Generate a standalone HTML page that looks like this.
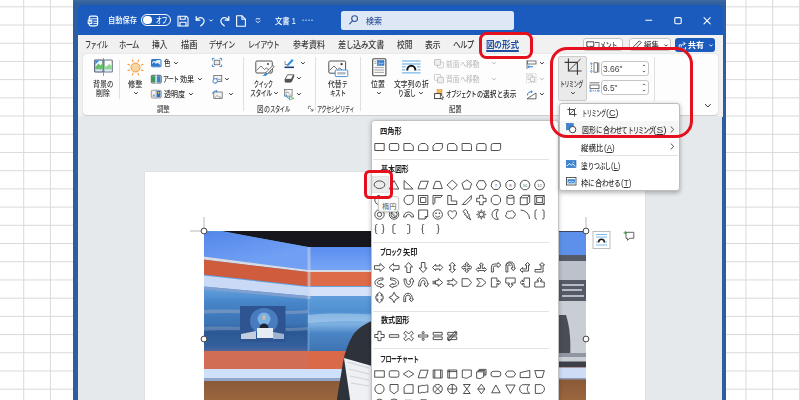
<!DOCTYPE html>
<html lang="ja"><head><meta charset="utf-8"><title>Word - 図の形式 - トリミング</title>
<style>
html,body{margin:0;padding:0;width:800px;height:400px;overflow:hidden;background:#fff}
#root{width:800px;height:400px;overflow:hidden;position:relative;background:#fff;font-family:"Liberation Sans","Noto Sans CJK JP",sans-serif}
.a{position:absolute}
.w{position:absolute;left:0;width:800px;height:0;white-space:pre}
.t{position:absolute;top:0;white-space:pre;transform-origin:0 50%;display:block}
svg{position:absolute;overflow:visible}
u{text-decoration:underline;text-underline-offset:1px;text-decoration-thickness:0.6px}
</style></head><body><div id="root">
<svg width="800" height="400" style="left:0;top:0" stroke="#dadada" stroke-width="1"><line x1="23.70" y1="0" x2="23.70" y2="400"/><line x1="50.45" y1="0" x2="50.45" y2="400"/><line x1="77.20" y1="0" x2="77.20" y2="400"/><line x1="103.95" y1="0" x2="103.95" y2="400"/><line x1="130.70" y1="0" x2="130.70" y2="400"/><line x1="157.45" y1="0" x2="157.45" y2="400"/><line x1="184.20" y1="0" x2="184.20" y2="400"/><line x1="210.95" y1="0" x2="210.95" y2="400"/><line x1="237.70" y1="0" x2="237.70" y2="400"/><line x1="264.45" y1="0" x2="264.45" y2="400"/><line x1="291.20" y1="0" x2="291.20" y2="400"/><line x1="317.95" y1="0" x2="317.95" y2="400"/><line x1="344.70" y1="0" x2="344.70" y2="400"/><line x1="371.45" y1="0" x2="371.45" y2="400"/><line x1="398.20" y1="0" x2="398.20" y2="400"/><line x1="424.95" y1="0" x2="424.95" y2="400"/><line x1="451.70" y1="0" x2="451.70" y2="400"/><line x1="478.45" y1="0" x2="478.45" y2="400"/><line x1="505.20" y1="0" x2="505.20" y2="400"/><line x1="531.95" y1="0" x2="531.95" y2="400"/><line x1="558.70" y1="0" x2="558.70" y2="400"/><line x1="585.45" y1="0" x2="585.45" y2="400"/><line x1="612.20" y1="0" x2="612.20" y2="400"/><line x1="638.95" y1="0" x2="638.95" y2="400"/><line x1="665.70" y1="0" x2="665.70" y2="400"/><line x1="692.45" y1="0" x2="692.45" y2="400"/><line x1="719.20" y1="0" x2="719.20" y2="400"/><line x1="745.95" y1="0" x2="745.95" y2="400"/><line x1="772.70" y1="0" x2="772.70" y2="400"/><line x1="799.45" y1="0" x2="799.45" y2="400"/><line x1="0" y1="6.80" x2="800" y2="6.80"/><line x1="0" y1="25.01" x2="800" y2="25.01"/><line x1="0" y1="43.22" x2="800" y2="43.22"/><line x1="0" y1="61.43" x2="800" y2="61.43"/><line x1="0" y1="79.64" x2="800" y2="79.64"/><line x1="0" y1="97.85" x2="800" y2="97.85"/><line x1="0" y1="116.06" x2="800" y2="116.06"/><line x1="0" y1="134.27" x2="800" y2="134.27"/><line x1="0" y1="152.48" x2="800" y2="152.48"/><line x1="0" y1="170.69" x2="800" y2="170.69"/><line x1="0" y1="188.90" x2="800" y2="188.90"/><line x1="0" y1="207.11" x2="800" y2="207.11"/><line x1="0" y1="225.32" x2="800" y2="225.32"/><line x1="0" y1="243.53" x2="800" y2="243.53"/><line x1="0" y1="261.74" x2="800" y2="261.74"/><line x1="0" y1="279.95" x2="800" y2="279.95"/><line x1="0" y1="298.16" x2="800" y2="298.16"/><line x1="0" y1="316.37" x2="800" y2="316.37"/><line x1="0" y1="334.58" x2="800" y2="334.58"/><line x1="0" y1="352.79" x2="800" y2="352.79"/><line x1="0" y1="371.00" x2="800" y2="371.00"/><line x1="0" y1="389.21" x2="800" y2="389.21"/></svg>

<div class="a" style="left:72.800px;top:0;width:653.200px;height:400px;background:linear-gradient(#3f6a9f 0,#31609f 3px,#2d5e9f 6px)"></div>
<div class="a" style="left:77.5px;top:5px;width:645px;height:40px;background:#1b5bbd;border-radius:5px 5px 0 0"></div>
<div class="a" style="left:77.5px;top:34.5px;width:645px;height:82px;background:#f1f1f1"></div>
<!-- search box -->
<div class="a" style="left:341.25px;top:11.25px;width:172.5px;height:18.75px;background:#dde7f6;border-radius:2.5px"></div>
<svg style="left:348px;top:14px" width="12" height="12" viewBox="0 0 12 12" fill="none" stroke="#2f5597" stroke-width="1.1" stroke-linecap="round"><circle cx="6.6" cy="4.6" r="2.9"/><path d="M4.5 6.8 L1.6 9.8"/></svg>
<!-- word icon -->
<svg style="left:86.500px;top:14.500px" width="12" height="12" viewBox="0 0 12 12" fill="none" stroke="#fff" stroke-width="1.200"><rect x="2.200" y="1.100" width="8.400" height="9.800" rx="1.800"/><path d="M2.600 3.800h8M6.400 6.200h4.200M6.400 8.400h4.200" stroke-width="0.900"/><rect x="0.700" y="4.700" width="4.600" height="4.400" rx="0.700" fill="#fff" stroke="none"/><path d="M1.700 5.800l0.700 2.300 0.600-1.700 0.600 1.700 0.700-2.300" stroke="#1b5bbd" stroke-width="0.500"/></svg>
<!-- toggle -->
<div class="a" style="left:141px;top:13.75px;width:30px;height:12.5px;box-sizing:border-box;border:1px solid #fff;border-radius:7px"></div>
<div class="a" style="left:143.3px;top:15.9px;width:8.4px;height:8.4px;background:#fff;border-radius:50%"></div>
<!-- save -->
<svg style="left:177px;top:14.5px" width="12" height="12" viewBox="0 0 12 12" fill="none" stroke="#fff" stroke-width="1.1" stroke-linejoin="round"><path d="M1 1.2h8.2l1.8 1.8v8H1z"/><path d="M3.2 1.2v3h5v-3M3 11V7.2h6V11"/></svg>
<!-- undo -->
<svg style="left:195px;top:14.5px" width="12" height="12" viewBox="0 0 12 12" fill="none" stroke="#fff" stroke-width="1.2" stroke-linecap="round" stroke-linejoin="round"><path d="M1.2 1.6v3.6h3.6"/><path d="M1.6 5c1.6-2.4 4.4-3 6.2-1.6 2 1.6 1.6 4.200-.2 5.800L5.800 10.800"/></svg>
<svg style="left:208.600px;top:18.500px" width="4" height="3" viewBox="0 0 4 3" fill="none" stroke="#fff" stroke-width="0.900"><path d="M0.400 0.500L2 2.200 3.600 0.500"/></svg>
<!-- redo -->
<svg style="left:217.500px;top:14.500px" width="12" height="12" viewBox="0 0 12 12" fill="none" stroke="#fff" stroke-width="1.200" stroke-linecap="round" stroke-linejoin="round"><path d="M10.800 1.600v3.600H7.200"/><path d="M10.400 5C8.800 2.600 6 2 4.200 3.400c-2 1.600-1.600 4.200.2 5.800L6.200 10.800"/></svg>
<!-- new doc -->
<svg style="left:235px;top:14.500px" width="12" height="12" viewBox="0 0 12 12" fill="none" stroke="#fff" stroke-width="1.100" stroke-linejoin="round"><path d="M1.600 0.800h5.400l3.400 3.400v7H1.600z"/><path d="M7 0.800v3.400h3.400"/></svg>
<!-- customize -->
<svg style="left:255px;top:17.500px" width="6" height="6" viewBox="0 0 6 6" fill="none" stroke="#fff" stroke-width="0.900"><path d="M0.800 0.800h4.400M0.800 2.600L3 4.800 5.200 2.600"/></svg>
<!-- dots -->
<svg style="left:302px;top:19px" width="12" height="3" viewBox="0 0 12 3" fill="#dfe8f7"><circle cx="1" cy="1.300" r="0.700"/><circle cx="4" cy="1.300" r="0.700"/><circle cx="7" cy="1.300" r="0.700"/><circle cx="10" cy="1.300" r="0.700"/></svg>
<!-- window buttons -->
<svg style="left:645px;top:16px" width="70" height="10" viewBox="0 0 70 10" fill="none" stroke="#fff" stroke-width="1.100" stroke-linecap="round"><path d="M0.800 4.200h6"/><rect x="29.800" y="1.600" width="6.400" height="6.200" rx="1.200"/><path d="M59 1.600l6.200 6.200M65.200 1.600L59 7.800"/></svg>
<!-- tab underline -->
<div class="a" style="left:486px;top:50.400px;width:33px;height:2px;background:#1e4e9f;border-radius:1px"></div>
<!-- comment button -->
<div class="a" style="left:582.500px;top:37.500px;width:40.500px;height:13.700px;box-sizing:border-box;border:1px solid #c4c4c4;border-radius:3px;background:#fff"></div>
<svg style="left:585.500px;top:41px" width="9" height="9" viewBox="0 0 9 9" fill="none" stroke="#333" stroke-width="0.900" stroke-linejoin="round"><path d="M0.800 0.800h7v4.600H4L2.200 7.200V5.400H0.800z"/></svg>
<!-- edit button -->
<div class="a" style="left:628.500px;top:37.500px;width:42px;height:13.700px;box-sizing:border-box;border:1px solid #c4c4c4;border-radius:3px;background:#fff"></div>
<svg style="left:632px;top:40px" width="10" height="10" viewBox="0 0 10 10" fill="none" stroke="#333" stroke-width="0.900" stroke-linejoin="round"><path d="M1 9l0.600-2.400L7.400 0.800l1.800 1.800L3.400 8.400z"/></svg>
<svg style="left:664px;top:43.500px" width="4" height="3" viewBox="0 0 4 3" fill="none" stroke="#333" stroke-width="0.900"><path d="M0.400 0.500L2 2.200 3.600 0.500"/></svg>
<!-- share button -->
<div class="a" style="left:675px;top:37.500px;width:40px;height:14px;border-radius:3px;background:#1b5bbd"></div>
<svg style="left:678px;top:40.500px" width="9" height="9" viewBox="0 0 9 9" fill="none" stroke="#fff" stroke-width="0.900" stroke-linejoin="round" stroke-linecap="round"><path d="M3 3.800H1.200v4.400h6.400V6.400"/><path d="M3 6c0-2 1.600-3.400 3.800-3.400M5.600 1l1.600 1.600L5.600 4.200"/></svg>
<svg style="left:708.600px;top:43.500px" width="4" height="3" viewBox="0 0 4 3" fill="none" stroke="#fff" stroke-width="0.900"><path d="M0.400 0.500L2 2.200 3.600 0.500"/></svg>

<div class="a" style="left:83px;top:53.750px;width:635px;height:60.750px;background:#fdfdfd;border-radius:4px;box-shadow:0 0.500px 1.500px rgba(0,0,0,0.180)"></div>
<div class="a" style="left:118.90px;top:60.00px;width:1px;height:39.00px;background:#e0e0e0"></div>
<div class="a" style="left:242.90px;top:57.00px;width:1px;height:54.00px;background:#e0e0e0"></div>
<div class="a" style="left:315.10px;top:57.00px;width:1px;height:54.00px;background:#e0e0e0"></div>
<div class="a" style="left:360.10px;top:57.00px;width:1px;height:54.00px;background:#e0e0e0"></div>
<div class="a" style="left:653.90px;top:57.00px;width:1px;height:44.00px;background:#e0e0e0"></div>
<svg style="left:93.50px;top:58.30px" width="19.00" height="18.00" viewBox="0 0 19 18">
<rect x="0.700" y="2" width="8.300" height="12" rx="0.800" fill="#eef5fc" stroke="#44546a" stroke-width="1.100"/>
<rect x="10" y="2" width="8.300" height="12" rx="0.800" fill="#fafafa" stroke="#6b7684" stroke-width="1.100"/>
<path d="M1.300 11.500V9L4.400 5.600L6.400 7.400L9 5V11.500z" fill="#69c06c"/>
<path d="M10 11.500V9.600L12.800 8L15.400 6L17.700 8V11.500z" fill="#8fd892"/>
<path d="M1.300 2.600H5.500L1.300 6.500z" fill="#3a8ddb"/>
<path d="M1.300 12H8.800M10.200 12H17.800" stroke="#bcd9f2" stroke-width="1"/>
<path d="M9.500 0V18" stroke="#6a7f96" stroke-width="0.800"/></svg>
<svg style="left:127.10px;top:58.50px" width="17.00" height="17.00" viewBox="0 0 17 17"><circle cx="8.500" cy="8.500" r="4.500" fill="#fbd5a0" stroke="#ee9d42" stroke-width="1"/><g stroke="#f0a04a" stroke-width="1.100" stroke-linecap="round"><path d="M14.33 10.90L16.08 11.62"/><path d="M10.93 14.31L11.66 16.07"/><path d="M6.10 14.33L5.38 16.08"/><path d="M2.69 10.93L0.93 11.66"/><path d="M2.67 6.10L0.92 5.38"/><path d="M6.07 2.69L5.34 0.93"/><path d="M10.90 2.67L11.62 0.92"/><path d="M14.31 6.07L16.07 5.34"/></g></svg>
<svg style="left:133.65px;top:91.55px" width="3.9" height="2.4" viewBox="0 0 3.9 2.4" fill="none" stroke="#3a3a3a" stroke-width="1.0" stroke-linecap="round" stroke-linejoin="round"><path d="M0.400 0.400L1.95 2.00L3.50 0.400"/></svg>
<svg style="left:151.00px;top:59.00px" width="10.50" height="8.50" viewBox="0 0 10.5 8.5"><rect x="0.500" y="0.500" width="9.500" height="7.300" rx="0.600" fill="#e3effb" stroke="#2b78cc" stroke-width="1"/><path d="M1 7.300V5L3 3L5 5L6.600 3.800L9.500 6.300V7.300z" fill="#2b78cc"/><path d="M1 1H6L4.500 2.600L3 1.800L1 3.600z" fill="#2b78cc"/></svg>
<svg style="left:174.30px;top:61.80px" width="3.9" height="2.4" viewBox="0 0 3.9 2.4" fill="none" stroke="#3a3a3a" stroke-width="1.0" stroke-linecap="round" stroke-linejoin="round"><path d="M0.400 0.400L1.95 2.00L3.50 0.400"/></svg>
<svg style="left:151.00px;top:74.80px" width="10.50" height="8.50" viewBox="0 0 10.5 8.5"><rect x="0.300" y="0.300" width="9.900" height="7.700" rx="0.800" fill="#dfeaf0" stroke="#3f4c5e" stroke-width="0.900"/><rect x="1" y="1.200" width="3.600" height="5.800" fill="#3d9a58"/><rect x="5.600" y="1.200" width="3.800" height="5.800" fill="#3c83c9"/><path d="M5.100 -0.500V9" stroke="#e8f0f8" stroke-width="1"/></svg>
<svg style="left:198.05px;top:77.80px" width="3.9" height="2.4" viewBox="0 0 3.9 2.4" fill="none" stroke="#3a3a3a" stroke-width="1.0" stroke-linecap="round" stroke-linejoin="round"><path d="M0.400 0.400L1.95 2.00L3.50 0.400"/></svg>
<svg style="left:151.00px;top:89.80px" width="10.50" height="8.50" viewBox="0 0 10.5 8.5"><rect x="0.300" y="0.300" width="9.900" height="7.700" rx="0.800" fill="#f0f0f0" stroke="#777" stroke-width="0.700"/><path d="M1 6.500L3 4L4.600 6.500z" fill="#9a9a9a"/><rect x="5.600" y="1" width="3.800" height="6.200" fill="#2c6fbe"/><circle cx="7.600" cy="2.800" r="0.900" fill="#f5c04a"/><path d="M5.100 -0.300V8.800" stroke="#9ab" stroke-width="0.700"/></svg>
<svg style="left:188.65px;top:93.20px" width="3.9" height="2.4" viewBox="0 0 3.9 2.4" fill="none" stroke="#3a3a3a" stroke-width="1.0" stroke-linecap="round" stroke-linejoin="round"><path d="M0.400 0.400L1.95 2.00L3.50 0.400"/></svg>
<svg style="left:211.50px;top:58.30px" width="10.00" height="9.00" viewBox="0 0 10 9"><rect x="2.200" y="2.200" width="5.600" height="4.600" fill="#e4ecf5" stroke="#555" stroke-width="0.700"/><g stroke="#2b7cd3" stroke-width="0.900" fill="none"><path d="M0.400 2.400V0.400H2.400M7.600 0.400H9.600V2.400M9.600 6.600V8.600H7.600M2.400 8.600H0.400V6.600"/></g></svg>
<svg style="left:211.50px;top:74.80px" width="10.50" height="9.00" viewBox="0 0 10.5 9"><rect x="1.800" y="0.400" width="8" height="6" fill="#f2f2f2" stroke="#555" stroke-width="0.700"/><path d="M2.500 5.600L5 3L7 5L8 4.200L9.300 5.600" fill="none" stroke="#666" stroke-width="0.600"/><circle cx="3.200" cy="6" r="2.300" fill="#fff" stroke="#2b7cd3" stroke-width="0.900"/><path d="M3.200 8.400l1.300-0.300-0.600-1z" fill="#2b7cd3"/></svg>
<svg style="left:225.05px;top:77.80px" width="3.9" height="2.4" viewBox="0 0 3.9 2.4" fill="none" stroke="#3a3a3a" stroke-width="1.0" stroke-linecap="round" stroke-linejoin="round"><path d="M0.400 0.400L1.95 2.00L3.50 0.400"/></svg>
<svg style="left:211.50px;top:89.50px" width="11.00" height="9.50" viewBox="0 0 11 9.5"><rect x="1.800" y="2" width="8.400" height="6.600" fill="#f2f2f2" stroke="#555" stroke-width="0.700"/><path d="M2.500 8L5 5.400L7 7.400L8 6.600L9.600 8" fill="none" stroke="#666" stroke-width="0.600"/><path d="M0.600 3.800C0.800 1.800 2.600 0.600 4.400 1" fill="none" stroke="#2b7cd3" stroke-width="0.900"/><path d="M4 0l1.600 1.100L4 2.300z" fill="#2b7cd3"/></svg>
<svg style="left:229.05px;top:93.20px" width="3.9" height="2.4" viewBox="0 0 3.9 2.4" fill="none" stroke="#3a3a3a" stroke-width="1.0" stroke-linecap="round" stroke-linejoin="round"><path d="M0.400 0.400L1.95 2.00L3.50 0.400"/></svg>
<svg style="left:254.50px;top:60.00px" width="20.00" height="17.00" viewBox="0 0 20 17"><rect x="0.800" y="1" width="16.500" height="12" rx="1.200" fill="#fafafa" stroke="#555" stroke-width="1"/><path d="M1.500 10.500L6 6L9.500 9.500L11.500 8L16.500 12" fill="none" stroke="#666" stroke-width="0.900"/><circle cx="13" cy="4" r="1" fill="#444"/><path d="M17.800 5.500L19.200 6.600L12.500 13.800L10.800 12.600z" fill="#fff" stroke="#555" stroke-width="0.800"/><path d="M11 12.400L12.600 13.900C11.800 15.800 9.600 16.400 7.400 16C9 15 9.600 13.600 11 12.400z" fill="#2f8de0"/></svg>
<svg style="left:274.05px;top:91.55px" width="3.9" height="2.4" viewBox="0 0 3.9 2.4" fill="none" stroke="#3a3a3a" stroke-width="1.0" stroke-linecap="round" stroke-linejoin="round"><path d="M0.400 0.400L1.95 2.00L3.50 0.400"/></svg>
<svg style="left:283.50px;top:57.50px" width="10.50" height="10.50" viewBox="0 0 10.5 10.5"><path d="M0.500 9.300H10" stroke="#1f3f77" stroke-width="1.600"/><path d="M3 6.500L8 1L9.600 2.400L4.800 7.600L2.600 8z" fill="#2f8de0"/><path d="M1 3V6.500H3" fill="none" stroke="#666" stroke-width="0.700"/></svg>
<svg style="left:301.05px;top:61.80px" width="3.9" height="2.4" viewBox="0 0 3.9 2.4" fill="none" stroke="#3a3a3a" stroke-width="1.0" stroke-linecap="round" stroke-linejoin="round"><path d="M0.400 0.400L1.95 2.00L3.50 0.400"/></svg>
<svg style="left:283.50px;top:73.50px" width="10.50" height="9.00" viewBox="0 0 10.5 9"><path d="M3.500 0.800H9.800L7.400 5.400H1z" fill="#fff" stroke="#444" stroke-width="0.800" stroke-linejoin="round"/><path d="M1 5.400V7.400C1 8 1.300 8.200 1.800 8.200H6.600C7.200 8.200 7.500 7.800 7.700 7.400L9.800 2.800V0.800L7.400 5.400z" fill="#555" stroke="#444" stroke-width="0.600" stroke-linejoin="round"/></svg>
<svg style="left:297.45px;top:77.30px" width="3.9" height="2.4" viewBox="0 0 3.9 2.4" fill="none" stroke="#3a3a3a" stroke-width="1.0" stroke-linecap="round" stroke-linejoin="round"><path d="M0.400 0.400L1.95 2.00L3.50 0.400"/></svg>
<svg style="left:283.50px;top:89.00px" width="12.00" height="11.00" viewBox="0 0 12 11"><rect x="0.500" y="0.500" width="7.600" height="6.600" fill="#f6f6f6" stroke="#666" stroke-width="0.700"/><path d="M1 1L7.600 6.600M1 3.500H5M1 5H3" stroke="#888" stroke-width="0.500"/><path d="M2.200 5.600C2.200 8.400 4 9.400 6 9.400" fill="none" stroke="#2b7cd3" stroke-width="1"/><path d="M5.600 7.400L9.800 9.400L5.600 10.800z" fill="#fff" stroke="#4aa564" stroke-width="0.800"/></svg>
<svg style="left:297.45px;top:93.20px" width="3.9" height="2.4" viewBox="0 0 3.9 2.4" fill="none" stroke="#3a3a3a" stroke-width="1.0" stroke-linecap="round" stroke-linejoin="round"><path d="M0.400 0.400L1.95 2.00L3.50 0.400"/></svg>
<svg style="left:328.20px;top:60.00px" width="21.00" height="18.00" viewBox="0 0 21 18"><rect x="0.800" y="1" width="16.800" height="12.200" rx="1.200" fill="#fafafa" stroke="#555" stroke-width="1"/><path d="M1.500 10.500L6 6L9.500 9.500L11.500 8L14 10" fill="none" stroke="#666" stroke-width="0.900"/><circle cx="13.600" cy="4.200" r="1.100" fill="#333"/><rect x="7.200" y="10" width="12.600" height="6.600" rx="1" fill="#fff" stroke="#4a90d6" stroke-width="1"/><rect x="9.400" y="12" width="8.200" height="2.600" fill="#b9bcc0"/></svg>
<svg style="left:371.50px;top:58.30px" width="15.00" height="18.50" viewBox="0 0 15 18.5"><rect x="0.700" y="0.700" width="13.200" height="17" rx="1" fill="#fbfbfb" stroke="#4a4a4a" stroke-width="1.100"/><rect x="5.400" y="2.600" width="6.600" height="4.800" fill="#3b86d2" stroke="#1f5fa8" stroke-width="0.500"/><path d="M6 6.500L8 4.600L9.400 6L11.400 5" fill="none" stroke="#fff" stroke-width="0.600"/><path d="M2.400 3.300H4.400M2.400 5.300H4.400M2.400 9.600H12M2.400 12H12M2.400 14.400H12" stroke="#9a9a9a" stroke-width="0.900"/></svg>
<svg style="left:376.80px;top:91.55px" width="3.9" height="2.4" viewBox="0 0 3.9 2.4" fill="none" stroke="#3a3a3a" stroke-width="1.0" stroke-linecap="round" stroke-linejoin="round"><path d="M0.400 0.400L1.95 2.00L3.50 0.400"/></svg>
<svg style="left:402.30px;top:59.60px" width="18.60" height="14.60" viewBox="0 0 18.6 14.6"><path d="M0 1H18.600M0 4H18.600M0 6.900H3.600M15 6.900H18.600M0 9.900H3M15.600 9.900H18.600M0 12.900H18.600" stroke="#58a6e6" stroke-width="1"/><path d="M5.200 10.600C5.200 4.200 13.400 4.200 13.400 10.600" fill="none" stroke="#1a1a1a" stroke-width="2.100"/></svg>
<svg style="left:419.30px;top:91.55px" width="3.9" height="2.4" viewBox="0 0 3.9 2.4" fill="none" stroke="#3a3a3a" stroke-width="1.0" stroke-linecap="round" stroke-linejoin="round"><path d="M0.400 0.400L1.95 2.00L3.50 0.400"/></svg>
<svg style="left:433.50px;top:58.50px" width="10.00" height="9.50" viewBox="0 0 10 9.5"><rect x="3.400" y="3.200" width="6" height="5.600" rx="0.600" fill="#fff" stroke="#c2c2c2" stroke-width="0.800"/><rect x="0.500" y="0.500" width="6.200" height="5.800" rx="0.600" fill="#efefef" stroke="#b9b9b9" stroke-width="0.800"/></svg>
<svg style="left:433.50px;top:73.50px" width="10.00" height="9.50" viewBox="0 0 10 9.5"><rect x="0.500" y="0.500" width="6.200" height="5.800" rx="0.600" fill="#fff" stroke="#c2c2c2" stroke-width="0.800"/><rect x="3.400" y="3.200" width="6" height="5.600" rx="0.600" fill="#efefef" stroke="#b9b9b9" stroke-width="0.800"/></svg>
<svg style="left:492.45px;top:62.30px" width="3.9" height="2.4" viewBox="0 0 3.9 2.4" fill="none" stroke="#bdbdbd" stroke-width="1.0" stroke-linecap="round" stroke-linejoin="round"><path d="M0.400 0.400L1.95 2.00L3.50 0.400"/></svg>
<svg style="left:492.45px;top:77.80px" width="3.9" height="2.4" viewBox="0 0 3.9 2.4" fill="none" stroke="#bdbdbd" stroke-width="1.0" stroke-linecap="round" stroke-linejoin="round"><path d="M0.400 0.400L1.95 2.00L3.50 0.400"/></svg>
<svg style="left:433.50px;top:89.00px" width="11.00" height="11.00" viewBox="0 0 11 11"><rect x="3" y="0.500" width="5" height="5.400" fill="#f4b860" stroke="#e29a3a" stroke-width="0.600"/><rect x="0.600" y="4.600" width="6.400" height="5" fill="#fff" stroke="#333" stroke-width="0.900"/><path d="M6.400 5.400L9.800 8.400L8.200 8.600L9 10.300L8.200 10.600L7.400 9L6.400 10z" fill="#fff" stroke="#222" stroke-width="0.600"/></svg>
<svg style="left:525.50px;top:59.50px" width="11.00" height="9.00" viewBox="0 0 11 9"><path d="M1 0V9" stroke="#555" stroke-width="0.800"/><rect x="1.600" y="1" width="8.400" height="3" fill="#fff" stroke="#555" stroke-width="0.800"/><path d="M2 6.800H7" stroke="#2b7cd3" stroke-width="1"/><path d="M3.400 5.400L1.800 6.800L3.400 8.200" fill="none" stroke="#2b7cd3" stroke-width="0.800"/></svg>
<svg style="left:540.05px;top:61.80px" width="3.9" height="2.4" viewBox="0 0 3.9 2.4" fill="none" stroke="#3a3a3a" stroke-width="1.0" stroke-linecap="round" stroke-linejoin="round"><path d="M0.400 0.400L1.95 2.00L3.50 0.400"/></svg>
<svg style="left:525.50px;top:73.30px" width="11.00" height="10.00" viewBox="0 0 11 10"><rect x="0.500" y="0.500" width="9.600" height="9" fill="none" stroke="#c4c4c4" stroke-width="0.700" stroke-dasharray="1.500 1"/><rect x="2" y="2" width="4.600" height="4.400" fill="#fff" stroke="#bdbdbd" stroke-width="0.800"/><rect x="4.200" y="4" width="4.600" height="4.400" fill="#f4f4f4" stroke="#bdbdbd" stroke-width="0.800"/></svg>
<svg style="left:540.05px;top:77.80px" width="3.9" height="2.4" viewBox="0 0 3.9 2.4" fill="none" stroke="#bdbdbd" stroke-width="1.0" stroke-linecap="round" stroke-linejoin="round"><path d="M0.400 0.400L1.95 2.00L3.50 0.400"/></svg>
<svg style="left:525.50px;top:89.50px" width="11.00" height="9.50" viewBox="0 0 11 9.5"><path d="M1 8.800H10V3z" fill="#fff" stroke="#444" stroke-width="0.800" stroke-linejoin="round"/><path d="M1.400 5.400C1.400 3 3.200 1.600 5.400 1.800" fill="none" stroke="#2b7cd3" stroke-width="1"/><path d="M5 0.300L6.800 1.800L5 3.200z" fill="#2b7cd3"/></svg>
<svg style="left:540.05px;top:93.20px" width="3.9" height="2.4" viewBox="0 0 3.9 2.4" fill="none" stroke="#3a3a3a" stroke-width="1.0" stroke-linecap="round" stroke-linejoin="round"><path d="M0.400 0.400L1.95 2.00L3.50 0.400"/></svg>
<div class="a" style="left:558px;top:55.600px;width:29px;height:45.400px;box-sizing:border-box;background:#eaeaea;border:1px solid #cdcdcd;border-radius:2px"></div>
<svg style="left:563.50px;top:58.00px" width="18.50" height="17.50" viewBox="0 0 18.5 17.5"><path d="M4.400 0.600V13H17.600M0.600 4.400H13.400V17" fill="none" stroke="#3a3a3a" stroke-width="1.100"/><path d="M4.600 12.800L16.600 1" stroke="#3a3a3a" stroke-width="0.900"/></svg>
<svg style="left:570.80px;top:92.30px" width="3.9" height="2.4" viewBox="0 0 3.9 2.4" fill="none" stroke="#3a3a3a" stroke-width="1.0" stroke-linecap="round" stroke-linejoin="round"><path d="M0.400 0.400L1.95 2.00L3.50 0.400"/></svg>
<svg style="left:589.50px;top:62.30px" width="10.50" height="11.20" viewBox="0 0 10.5 11.2"><rect x="4" y="0.800" width="3.600" height="9.400" fill="#fff" stroke="#555" stroke-width="0.800"/><path d="M8.800 0.600V10.400" stroke="#555" stroke-width="0.800"/><path d="M1.400 1.600V9.600" stroke="#2b7cd3" stroke-width="0.900" stroke-dasharray="1.200 0.900"/><path d="M0.300 2.200L1.400 0.600L2.500 2.200M0.300 9L1.400 10.600L2.500 9" fill="none" stroke="#2b7cd3" stroke-width="0.700"/></svg>
<svg style="left:589.00px;top:81.50px" width="11.00" height="10.50" viewBox="0 0 11 10.5"><rect x="1" y="3" width="9" height="3.400" fill="#fff" stroke="#555" stroke-width="0.800"/><path d="M0.600 0.800H10.400" stroke="#555" stroke-width="0.800"/><path d="M1.600 8.800H9.400" stroke="#2b7cd3" stroke-width="0.900" stroke-dasharray="1.200 0.900"/><path d="M2.200 7.700L0.600 8.800L2.200 9.900M8.800 7.700L10.400 8.800L8.800 9.900" fill="none" stroke="#2b7cd3" stroke-width="0.700"/></svg>
<div class="a" style="left:601px;top:60.60px;width:48.400px;height:15px;box-sizing:border-box;background:#fff;border:1px solid #c6c6c6;border-radius:3px"></div>
<svg style="left:642.400px;top:63.60px" width="4" height="9" viewBox="0 0 4 9" fill="none" stroke="#444" stroke-width="0.800"><path d="M0.800 2.100L2 0.900L3.200 2.100M0.800 6.900L2 8.100L3.200 6.900"/></svg>
<div class="a" style="left:601px;top:80.00px;width:48.400px;height:15px;box-sizing:border-box;background:#fff;border:1px solid #c6c6c6;border-radius:3px"></div>
<svg style="left:642.400px;top:83.00px" width="4" height="9" viewBox="0 0 4 9" fill="none" stroke="#444" stroke-width="0.800"><path d="M0.800 2.100L2 0.900L3.200 2.100M0.800 6.900L2 8.100L3.200 6.900"/></svg>
<svg style="left:705.10px;top:104.30px" width="5.8" height="3.4" viewBox="0 0 5.8 3.4" fill="none" stroke="#333" stroke-width="1.0" stroke-linecap="round" stroke-linejoin="round"><path d="M0.400 0.400L2.90 3.00L5.40 0.400"/></svg>
<svg style="left:308.00px;top:106.00px" width="5.50" height="5.50" viewBox="0 0 5.5 5.5"><path d="M0.400 3V0.400H3M2 2L5 5M5 2.800V5H2.800" fill="none" stroke="#555" stroke-width="0.700"/></svg>
<div class="a" style="left:77.500px;top:116px;width:644.600px;height:284px;background:#e6e9ec"></div>
<div class="a" style="left:145px;top:172px;width:500px;height:240px;background:#fff;box-shadow:0 0 0 0.600px #d9dcdf"></div>
<svg style="left:204px;top:231px;overflow:hidden" width="382" height="170" viewBox="0 0 382 170">
<defs>
<linearGradient id="wall" gradientUnits="userSpaceOnUse" x1="0" y1="59" x2="0" y2="121"><stop offset="0" stop-color="#5f9edb"/><stop offset="0.200" stop-color="#4685c8"/><stop offset="0.550" stop-color="#3b73b4"/><stop offset="0.680" stop-color="#2b5894"/><stop offset="0.900" stop-color="#315f9c"/><stop offset="1" stop-color="#54699c"/></linearGradient>
<linearGradient id="wall2" gradientUnits="userSpaceOnUse" x1="0" y1="59" x2="0" y2="121"><stop offset="0" stop-color="#64a2de"/><stop offset="0.350" stop-color="#5090d0"/><stop offset="0.550" stop-color="#7fb2e2"/><stop offset="0.700" stop-color="#4a84c4"/><stop offset="1" stop-color="#3f73b2"/></linearGradient>
<linearGradient id="wood" x1="0" y1="0" x2="0" y2="1"><stop offset="0" stop-color="#8a5a38"/><stop offset="1" stop-color="#a06a40"/></linearGradient>
<linearGradient id="bb" gradientUnits="userSpaceOnUse" x1="0" y1="2" x2="8" y2="38"><stop offset="0" stop-color="#5587ea"/><stop offset="1" stop-color="#6f9ff4"/></linearGradient><linearGradient id="bb2" gradientUnits="userSpaceOnUse" x1="0" y1="16" x2="0" y2="39"><stop offset="0" stop-color="#5a8df0"/><stop offset="1" stop-color="#78a6f6"/></linearGradient><filter id="bl" x="-5%" y="-5%" width="110%" height="110%"><feGaussianBlur stdDeviation="0.700"/></filter>
</defs>
<g filter="url(#bl)">
<rect x="-5" y="-5" width="392" height="180" fill="#15171b"/>
<!-- left wall (slanted) -->
<path d="M-5 0H18L104 16V150H-5z" fill="url(#wall)"/>
<!-- right wall -->
<path d="M104 16H390V150H104z" fill="url(#wall2)"/>
<!-- top blue band left -->
<path d="M-5 0.500H18L104 16V39L-5 25z" fill="url(#bb)"/>
<path d="M104 16H390V39H104z" fill="url(#bb2)"/>
<!-- white gap -->
<path d="M-5 25L104 39V41L-5 28z" fill="#d8dbe6"/>
<path d="M104 39H390V41H104z" fill="#d8dbe6"/>
<!-- orange band -->
<path d="M-5 28L104 41V55L-5 43z" fill="#cf5b3d"/>
<path d="M104 41H390V55H104z" fill="#dd6a48"/>
<!-- pale band -->
<path d="M-5 44L104 56V65L-5 55z" fill="#c9d9f6"/>
<path d="M104 56H390V65H104z" fill="#d6e2fa"/>
<path d="M-5 55L104 65V68L-5 58z" fill="#7f9fd0"/>
<!-- corner column -->
<rect x="103.500" y="16" width="3" height="52" fill="#cfd8ea" opacity="0.550"/>
<rect x="103.500" y="68" width="2" height="82" fill="#7aa6d8" opacity="0.600"/>
<!-- wall swooshes -->
<path d="M-5 79C30 77 70 82 104 79V82C70 85 30 80 -5 83z" fill="#8fa3c2" opacity="0.550"/>
<path d="M-5 96C30 94 70 99 104 96V99C70 102 30 97 -5 100z" fill="#8fa3c2" opacity="0.450"/>
<path d="M104 84C160 78 230 92 300 84V90C230 98 170 86 104 92z" fill="#a9cdee" opacity="0.600"/>
<!-- monitor on wall -->
<rect x="36" y="75" width="45.500" height="36" fill="#2f5591"/>
<ellipse cx="60" cy="90" rx="14" ry="13" fill="#4f86c9" opacity="0.800"/>
<circle cx="60" cy="88" r="6.500" fill="#86bdf0" opacity="0.800"/>
<ellipse cx="60" cy="86.500" rx="1.900" ry="2.500" fill="#c9b9a8"/>
<path d="M55.500 97C55.500 91 64.500 91 64.500 97z" fill="#1c2330"/>
<path d="M37 103L52 100V108H37z" fill="#c3cede"/>
<rect x="53" y="97" width="16" height="10" fill="#e6ecf4"/>
<path d="M69 101L80 103V108H69z" fill="#9fb4d2"/>
<!-- lower orange band -->
<path d="M-5 120H390V138H-5z" fill="#d9694a"/>
<path d="M-5 120H104V138H-5z" fill="#cb6f5c" opacity="0.600"/>
<!-- lower pale band -->
<path d="M-5 138H390V149H-5z" fill="#cfe0fa"/>
<path d="M-5 147H390V150H-5z" fill="#8fa6c8"/>
<!-- wood -->
<rect x="-5" y="150" width="395" height="25" fill="url(#wood)"/>
<!-- presenter -->
<path d="M170 89C160 93 153 98 149 104C144 112 141 121 139 131C137 145 134 160 132 175H170z" fill="#2f323a"/>
<path d="M140 127L168 135V175H147z" fill="#eef0f3"/>
<path d="M143.500 131L165 137M145 138L165 143M146 145L165 149M147 152L165 155" stroke="#cfd3da" stroke-width="1.200"/>
<!-- right strip (visible right of the shapes panel) -->
<rect x="353" y="-2" width="32" height="26" fill="#5c90ea"/>
<rect x="353" y="-2" width="32" height="3" fill="#3a4660"/>
<rect x="353" y="24" width="32" height="8" fill="#555a66"/>
<rect x="353" y="30" width="32" height="19" fill="#bcc1cc"/>
<rect x="353" y="49" width="32" height="21" fill="#555a66"/>
<path d="M358 54H380M358 59H378M358 65H380" stroke="#b4bac6" stroke-width="1.800"/>
<rect x="353" y="70" width="32" height="62" fill="#c9cdd4"/>
<path d="M353 84H362C366 96 367 112 366 126H353z" fill="#4b4e57"/>
<rect x="353" y="122" width="32" height="4" fill="#9097a2"/>
<rect x="353" y="130.500" width="32" height="6" fill="#3c404a"/>
<rect x="353" y="136.500" width="32" height="11" fill="#cfdcf6"/>
<rect x="353" y="147" width="32" height="2" fill="#8f9fba"/>
<rect x="353" y="148.500" width="32" height="27" fill="url(#wood)"/>
</g>
</svg>
<div class="a" style="left:371px;top:120px;width:188px;height:300px;box-sizing:border-box;background:#fff;border:1px solid #c3c3c3;border-radius:3.500px;box-shadow:0 1px 4px rgba(0,0,0,0.250)"></div>
<div class="a" style="left:372px;top:176px;width:16.700px;height:17px;background:#ececec;box-shadow:inset 0 0 0 0.500px #dcdcdc"></div>
<div class="a" style="left:372.500px;top:159.00px;width:176px;height:1px;background:#e3e3e3"></div>
<div class="a" style="left:372.500px;top:241.50px;width:176px;height:1px;background:#e3e3e3"></div>
<div class="a" style="left:372.500px;top:310.50px;width:176px;height:1px;background:#e3e3e3"></div>
<div class="a" style="left:372.500px;top:347.50px;width:176px;height:1px;background:#e3e3e3"></div>
<svg style="left:0;top:0" width="800" height="400" viewBox="0 0 800 400" fill="none" stroke="#3e3e3e" stroke-width="0.900" stroke-linejoin="miter"><g transform="translate(379.50 147.00)"><path d="M-4.700 -3.500H4.700V3.500H-4.700z" /></g><g transform="translate(394.05 147.00)"><rect x="-4.700" y="-3.500" width="9.400" height="7" rx="1.600"/></g><g transform="translate(408.60 147.00)"><path d="M-4.700 -3.500H2.200L4.700 -1V3.500H-4.700z" /></g><g transform="translate(423.15 147.00)"><path d="M-2.200 -3.500H2.200L4.700 -1V3.500H-4.700V-1z" /></g><g transform="translate(437.70 147.00)"><path d="M-2.200 -3.500H4.700V1L2.200 3.500H-4.700V-1z" /></g><g transform="translate(452.25 147.00)"><path d="M-2.700 -3.500H2.200L4.700 -1V3.500H-4.700V-1.500A2 2 0 0 1 -2.700 -3.500z" /></g><g transform="translate(466.80 147.00)"><path d="M-4.700 -3.500H2.700A2 2 0 0 1 4.700 -1.500V3.500H-4.700z" /></g><g transform="translate(481.35 147.00)"><path d="M-2.700 -3.500H2.700A2 2 0 0 1 4.700 -1.500V3.500H-4.700V-1.500A2 2 0 0 1 -2.700 -3.500z" /></g><g transform="translate(495.90 147.00)"><path d="M-2.700 -3.500H4.700V1.500A2 2 0 0 1 2.700 3.500H-4.700V-1.500A2 2 0 0 1 -2.700 -3.500z" /></g><g transform="translate(379.50 185.00)"><ellipse cx="0" cy="-0.300" rx="5.300" ry="3.800"/></g><g transform="translate(394.05 185.00)"><path d="M0 -4.500L4.700 4H-4.700z" /></g><g transform="translate(408.60 185.00)"><path d="M-4.500 -4.500V4H4.500z" /></g><g transform="translate(423.15 185.00)"><path d="M-2.400 -3.800H5.200L2.400 3.800H-5.200z" /></g><g transform="translate(437.70 185.00)"><path d="M-2.200 -3.600H2.200L4.700 3.600H-4.700z" /></g><g transform="translate(452.25 185.00)"><path d="M0 -4.800L5.200 0L0 4.800L-5.200 0z" /></g><g transform="translate(466.80 185.00)"><path d="M0.00 -5.10L4.85 -1.58L3.00 4.13L-3.00 4.13L-4.85 -1.58z" /></g><g transform="translate(481.35 185.00)"><path d="M5.00 0.00L2.50 4.33L-2.50 4.33L-5.00 0.00L-2.50 -4.33L2.50 -4.33z" /></g><g transform="translate(495.90 185.00)"><path d="M0.00 -4.90L3.83 -3.06L4.78 1.09L2.13 4.41L-2.13 4.41L-4.78 1.09L-3.83 -3.06z" /><text x="0" y="1.500" font-size="4" text-anchor="middle" fill="#555" stroke="none" font-family="Liberation Sans,sans-serif">7</text></g><g transform="translate(510.45 185.00)"><path d="M4.53 1.88L1.88 4.53L-1.88 4.53L-4.53 1.88L-4.53 -1.88L-1.88 -4.53L1.88 -4.53L4.53 -1.88z" /><text x="0" y="1.500" font-size="4" text-anchor="middle" fill="#555" stroke="none" font-family="Liberation Sans,sans-serif">8</text></g><g transform="translate(525.00 185.00)"><path d="M4.90 0.00L3.96 2.88L1.51 4.66L-1.51 4.66L-3.96 2.88L-4.90 0.00L-3.96 -2.88L-1.51 -4.66L1.51 -4.66L3.96 -2.88z" /><text x="0" y="1.500" font-size="4" text-anchor="middle" fill="#555" stroke="none" font-family="Liberation Sans,sans-serif">10</text></g><g transform="translate(539.55 185.00)"><path d="M4.73 1.27L3.46 3.46L1.27 4.73L-1.27 4.73L-3.46 3.46L-4.73 1.27L-4.73 -1.27L-3.46 -3.46L-1.27 -4.73L1.27 -4.73L3.46 -3.46L4.73 -1.27z" /><text x="0" y="1.500" font-size="4" text-anchor="middle" fill="#555" stroke="none" font-family="Liberation Sans,sans-serif">12</text></g><g transform="translate(379.50 200.00)"><path d="M0 0V-4.700A4.700 4.700 0 1 0 4.700 0z" /></g><g transform="translate(394.05 200.00)"><path d="M-2 -4.200A4.700 4.700 0 1 0 4.200 2z" /></g><g transform="translate(408.60 200.00)"><path d="M4.600 -4.600V0A4.600 4.600 0 1 1 0 -4.600z" /></g><g transform="translate(423.15 200.00)"><path d="M-4.700 -4.500H4.700V4.500H-4.700zM-2.700 -2.500V2.500H2.700V-2.500z" /></g><g transform="translate(437.70 200.00)"><path d="M-4.700 -4.500H4.700L3 -2.600H-2.800V2.800L-4.700 4.500z" /></g><g transform="translate(452.25 200.00)"><path d="M-4.500 -4.500H-1V1H4.500V4.500H-4.500z" /></g><g transform="translate(466.80 200.00)"><path d="M4.500 -4.500V-1L-1 4.500H-4.500z" /></g><g transform="translate(481.35 200.00)"><path d="M-1.700 -4.700H1.700V-1.700H4.700V1.700H1.700V4.700H-1.700V1.700H-4.700V-1.700H-1.700z" /></g><g transform="translate(495.90 200.00)"><path d="M4.62 1.91L1.91 4.62L-1.91 4.62L-4.62 1.91L-4.62 -1.91L-1.91 -4.62L1.91 -4.62L4.62 -1.91z" /></g><g transform="translate(510.45 200.00)"><path d="M-3.500 -3.200V3.200A3.500 1.500 0 0 0 3.500 3.200V-3.200A3.500 1.500 0 0 0 -3.500 -3.200A3.500 1.500 0 0 0 3.500 -3.200" /></g><g transform="translate(525.00 200.00)"><path d="M-4.700 -2.200H2.200V4.700H-4.700zM-4.700 -2.200L-2.200 -4.700H4.700L2.200 -2.200M4.700 -4.700V2.200L2.200 4.700" /></g><g transform="translate(539.55 200.00)"><path d="M-4.700 -4.500H4.700V4.500H-4.700zM-2.900 -2.700V2.700H2.900V-2.700zM-4.700 -4.500L-2.900 -2.700M4.700 -4.500L2.900 -2.700M4.700 4.500L2.900 2.700M-4.700 4.500L-2.900 2.700" /></g><g transform="translate(379.50 214.50)"><circle r="4.700"/><circle r="2.200"/></g><g transform="translate(394.05 214.50)"><circle r="4.700"/><circle r="3.100"/><path d="M-2.200 -2.200L2.200 2.200M-3 -1.400L1.400 3" stroke-width="0.700"/></g><g transform="translate(408.60 214.50)"><path d="M-5 2.500A5 5 0 0 1 5 2.500H2.600A2.600 2.600 0 0 0 -2.600 2.500z" /></g><g transform="translate(423.15 214.50)"><path d="M-4.500 -4.500H4.500V2L2 4.500H-4.500zM4.500 2H2V4.500" /></g><g transform="translate(437.70 214.50)"><circle r="4.700"/><path d="M-2.400 1.400C-1 3 1 3 2.400 1.400" /><circle cx="-1.700" cy="-1.300" r="0.450" fill="#444"/><circle cx="1.700" cy="-1.300" r="0.450" fill="#444"/></g><g transform="translate(452.25 214.50)"><path d="M0 4.500C-7.500 -0.500 -3.500 -6.500 0 -2.500C3.500 -6.500 7.500 -0.500 0 4.500z" /></g><g transform="translate(466.80 214.50)"><path d="M-1.500 -5L-4 -3L-1.200 -0.800L-2.400 0L0.600 2L-0.200 2.600L4 5.400L1.800 1.200L2.800 0.600L0.200 -1.800L1.200 -2.400z" /></g><g transform="translate(481.35 214.50)"><circle r="2.300"/><path d="M3.10 -0.77L4.90 0.00L3.10 0.77zM2.74 1.65L3.46 3.46L1.65 2.74zM0.77 3.10L0.00 4.90L-0.77 3.10zM-1.65 2.74L-3.46 3.46L-2.74 1.65zM-3.10 0.77L-4.90 0.00L-3.10 -0.77zM-2.74 -1.65L-3.46 -3.46L-1.65 -2.74zM-0.77 -3.10L-0.00 -4.90L0.77 -3.10zM1.65 -2.74L3.46 -3.46L2.74 -1.65z" stroke-width="0.600"/></g><g transform="translate(495.90 214.50)"><path d="M2.500 -4.800A5 5 0 1 0 2.500 4.800A6.500 6.500 0 0 1 2.500 -4.800z" /></g><g transform="translate(510.45 214.50)"><path d="M-3 3C-5.200 3 -5.400 0.200 -3.800 -0.400C-4.600 -3 -1.600 -4.200 -0.600 -2.800C0.600 -4.600 3.600 -3.800 3.400 -1.800C5.400 -1.600 5.400 1.600 3.600 2C3.600 3.800 1 4.400 0.200 3.200C-0.800 4.400 -2.800 4.200 -3 3z" /></g><g transform="translate(525.00 214.50)"><path d="M-4.500 -4.500A9 9 0 0 1 4.500 4.500" /></g><g transform="translate(539.55 214.50)"><path d="M-2.500 -4.500H-3.200A1.300 1.300 0 0 0 -4.500 -3.200V3.200A1.300 1.300 0 0 0 -3.200 4.500H-2.500M2.500 -4.500H3.200A1.300 1.300 0 0 1 4.500 -3.200V3.200A1.300 1.300 0 0 1 3.200 4.500H2.500" /></g><g transform="translate(379.50 229.00)"><g transform="translate(-1.200 0)"><path d="M-1 -4.500H-1.700A0.900 0.900 0 0 0 -2.600 -3.600V-0.900A0.900 0.900 0 0 1 -3.500 0A0.900 0.900 0 0 1 -2.600 0.900V3.600A0.900 0.900 0 0 0 -1.700 4.500H-1" /></g><g transform="translate(1.200 0)"><path d="M1 -4.500H1.700A0.900 0.900 0 0 1 2.600 -3.600V-0.900A0.900 0.900 0 0 0 3.500 0A0.900 0.900 0 0 0 2.600 0.900V3.600A0.900 0.900 0 0 1 1.700 4.500H1" /></g></g><g transform="translate(394.05 229.00)"><path d="M1.500 -4.500H0.200A1.300 1.300 0 0 0 -1.100 -3.200V3.200A1.300 1.300 0 0 0 0.200 4.500H1.500" /></g><g transform="translate(408.60 229.00)"><path d="M-1.500 -4.500H-0.200A1.300 1.300 0 0 1 1.100 -3.200V3.200A1.300 1.300 0 0 1 -0.200 4.500H-1.500" /></g><g transform="translate(423.15 229.00)"><g transform="translate(2 0)"><path d="M-1 -4.500H-1.700A0.900 0.900 0 0 0 -2.600 -3.600V-0.900A0.900 0.900 0 0 1 -3.500 0A0.900 0.900 0 0 1 -2.600 0.900V3.600A0.900 0.900 0 0 0 -1.700 4.500H-1" /></g></g><g transform="translate(437.70 229.00)"><g transform="translate(-2 0)"><path d="M1 -4.500H1.700A0.900 0.900 0 0 1 2.600 -3.600V-0.900A0.900 0.900 0 0 0 3.500 0A0.900 0.900 0 0 0 2.600 0.900V3.600A0.900 0.900 0 0 1 1.700 4.500H1" /></g></g><g transform="translate(379.50 267.50)"><path d="M-5 -1.800H0.500V-4L5 0L0.500 4V1.800H-5z" /></g><g transform="translate(394.05 267.50)"><g transform="scale(-1 1)"><path d="M-5 -1.800H0.500V-4L5 0L0.500 4V1.800H-5z" /></g></g><g transform="translate(408.60 267.50)"><g transform="rotate(-90)"><path d="M-5 -1.800H0.500V-4L5 0L0.500 4V1.800H-5z" /></g></g><g transform="translate(423.15 267.50)"><g transform="rotate(90)"><path d="M-5 -1.800H0.500V-4L5 0L0.500 4V1.800H-5z" /></g></g><g transform="translate(437.70 267.50)"><path d="M-5.200 0L-2 -3.200V-1.500H2V-3.200L5.200 0L2 3.200V1.500H-2V3.200z" /></g><g transform="translate(452.25 267.50)"><g transform="rotate(90)"><path d="M-5.200 0L-2 -3.200V-1.500H2V-3.200L5.200 0L2 3.200V1.500H-2V3.200z" /></g></g><g transform="translate(466.80 267.50)"><path d="M0 -5.200L2 -3H0.900V-0.900H3V-2L5.200 0L3 2V0.900H0.900V3H2L0 5.200L-2 3H-0.900V0.900H-3V2L-5.200 0L-3 -2V-0.900H-0.900V-3H-2z" /></g><g transform="translate(481.35 267.50)"><path d="M0 -4.800L2 -2.600H0.900V1H3V-0.200L5.200 2L3 4.200V3H-3V4.200L-5.200 2L-3 -0.200V1H-0.900V-2.600H-2z" /></g><g transform="translate(495.90 267.50)"><path d="M-4.500 4.500V-0.500A3 3 0 0 1 -1.500 -3.500H2V-5L5 -2.500L2 0V-1.500H-1A1.500 1.500 0 0 0 -2.500 0V4.500z" /></g><g transform="translate(510.45 267.50)"><path d="M-4.500 4.500V-1.500A3.200 3.200 0 0 1 1.900 -1.500V0.500H0.600L2.800 3.200L5 0.500H3.800V-1.500A4 4 0 0 0 -4.500 -1.500M-4.500 4.500H-2.600V-1.500A1.300 1.300 0 0 1 0 -1.500" stroke-linejoin="round"/></g><g transform="translate(525.00 267.50)"><path d="M-5 2.500L-2.500 0V1.500H1.500V-2.500H0L2.500 -5L5 -2.500H3.500V3.500H-2.500V5z" /></g><g transform="translate(539.55 267.50)"><path d="M-4.500 2H1.500V-2.500H0L2.500 -5L5 -2.500H3.500V4.500H-4.500z" /></g><g transform="translate(379.50 282.50)"><path d="M3.500 -4.600C-1.500 -4.600 -4.600 -2.400 -4.600 0.200C-4.600 2.600 -2 4.200 1.200 4.400V5.400L4.600 3.200L1.200 0.800V2C-0.800 1.800 -2.200 1.200 -2.200 0.200C-2.200 -1.400 0.200 -2.600 3.500 -2.600z" stroke-linejoin="round"/></g><g transform="translate(394.05 282.50)"><g transform="scale(-1 1)"><path d="M3.500 -4.600C-1.500 -4.600 -4.600 -2.400 -4.600 0.200C-4.600 2.600 -2 4.200 1.200 4.400V5.400L4.600 3.200L1.200 0.800V2C-0.800 1.800 -2.200 1.200 -2.200 0.200C-2.200 -1.400 0.200 -2.600 3.500 -2.600z" stroke-linejoin="round"/></g></g><g transform="translate(408.60 282.50)"><g transform="rotate(-90)"><path d="M3.500 -4.600C-1.500 -4.600 -4.600 -2.400 -4.600 0.200C-4.600 2.600 -2 4.200 1.200 4.400V5.400L4.600 3.200L1.200 0.800V2C-0.800 1.800 -2.200 1.200 -2.200 0.200C-2.200 -1.400 0.200 -2.600 3.500 -2.600z" stroke-linejoin="round"/></g></g><g transform="translate(423.15 282.50)"><g transform="scale(1 -1) rotate(-90)"><path d="M3.500 -4.600C-1.500 -4.600 -4.600 -2.400 -4.600 0.200C-4.600 2.600 -2 4.200 1.200 4.400V5.400L4.600 3.200L1.200 0.800V2C-0.800 1.800 -2.200 1.200 -2.200 0.200C-2.200 -1.400 0.200 -2.600 3.500 -2.600z" stroke-linejoin="round"/></g></g><g transform="translate(437.70 282.50)"><path d="M-2.200 -1.800H0.500V-4L5 0L0.500 4V1.800H-2.200zM-3.400 -1.800V1.800M-4.600 -1.800V1.800" /></g><g transform="translate(452.25 282.50)"><path d="M-5 -1.800H0.500V-4L5 0L0.500 4V1.800H-5L-3.200 0z" /></g><g transform="translate(466.80 282.50)"><path d="M-4.700 -3.800H1.500L4.700 0L1.500 3.800H-4.700z" /></g><g transform="translate(481.35 282.50)"><path d="M-4.700 -3.800H0.500L4.700 0L0.500 3.800H-4.700L-1.500 0z" /></g><g transform="translate(495.90 282.50)"><path d="M-4.500 -4.500H1V-1H2.500V-2.400L5 0L2.500 2.400V1H1V4.500H-4.500z" /></g><g transform="translate(510.45 282.50)"><path d="M-4.700 -4.500H4.700V0.500H1.200V2.200H2.600L0 5L-2.600 2.200H-1.200V0.500H-4.700z" /></g><g transform="translate(525.00 282.50)"><g transform="scale(-1 1)"><path d="M-4.500 -4.500H1V-1H2.500V-2.400L5 0L2.500 2.400V1H1V4.500H-4.500z" /></g></g><g transform="translate(539.55 282.50)"><g transform="scale(1 -1)"><path d="M-4.700 -4.500H4.700V0.500H1.200V2.200H2.600L0 5L-2.600 2.200H-1.200V0.500H-4.700z" /></g></g><g transform="translate(379.50 297.50)"><path d="M0 -5.200L3 -2.800H1.600V-1.600H3.600V1.600H1.600V2.800H3L0 5.200L-3 2.800H-1.600V1.600H-3.600V-1.600H-1.600V-2.800H-3z" /></g><g transform="translate(394.05 297.50)"><path d="M0 -5.200L1.600 -2H2V-1.600L5.200 0L2 1.600V2H1.600L0 5.200L-1.600 2H-2V1.600L-5.200 0L-2 -1.600V-2H-1.600z" /></g><g transform="translate(408.60 297.50)"><path d="M-4.800 4.200V0A4.200 4.200 0 0 1 3.600 0V1.500H4.900L2.800 4.200L0.700 1.500H1.800V0A2.400 2.400 0 0 0 -3 0V4.200z" stroke-linejoin="round"/></g><g transform="translate(379.50 336.00)"><path d="M-1.500 -4.700H1.500V-1.500H4.700V1.500H1.500V4.700H-1.500V1.500H-4.700V-1.500H-1.500z" /></g><g transform="translate(394.05 336.00)"><path d="M-4.700 -1.300H4.700V1.300H-4.700z" /></g><g transform="translate(408.60 336.00)"><g transform="rotate(45)"><path d="M-1.400 -5.400H1.400V-1.400H5.400V1.400H1.400V5.400H-1.400V1.400H-5.400V-1.400H-1.400z" /></g></g><g transform="translate(423.15 336.00)"><path d="M-4.700 -1H4.700V1H-4.700z" /><circle cy="-3.300" r="1.100"/><circle cy="3.300" r="1.100"/></g><g transform="translate(437.70 336.00)"><path d="M-4.500 -3.600H4.500V-0.900H-4.500zM-4.500 0.900H4.500V3.600H-4.500z" /></g><g transform="translate(452.25 336.00)"><path d="M-4.500 -3.600H4.500V-0.900H-4.500zM-4.500 0.900H4.500V3.600H-4.500zM3 -5L4.600 -4L-3 5L-4.600 4z" /></g><g transform="translate(379.50 374.00)"><path d="M-4.800 -3.200H4.800V3.200H-4.800z" /></g><g transform="translate(394.05 374.00)"><rect x="-4.800" y="-3.200" width="9.600" height="6.400" rx="1.700"/></g><g transform="translate(408.60 374.00)"><path d="M0 -3.400L5.200 0L0 3.400L-5.200 0z" /></g><g transform="translate(423.15 374.00)"><path d="M-2.600 -3.800H5L2.600 3.800H-5z" /></g><g transform="translate(437.70 374.00)"><path d="M-4.500 -4H4.500V4H-4.500zM-2.900 -4V4M2.900 -4V4" /></g><g transform="translate(452.25 374.00)"><path d="M-4.500 -4H4.500V4H-4.500zM-2.900 -4V4M-4.500 -2.400H4.500" /></g><g transform="translate(466.80 374.00)"><path d="M-4.500 -4H4.500V2.200C2.500 2.200 1.500 4.200 0 4.200C-2 4.200 -3 3.400 -4.500 3.400z" /></g><g transform="translate(481.35 374.00)"><path d="M-4.700 -2.200H2.300V3C0.500 3 0 4.600 -1.500 4.600C-3 4.600 -3.500 4 -4.700 4zM-3.400 -2.200V-3.400H3.500V2M-2.200 -3.400V-4.600H4.700V0.800H3.500" /></g><g transform="translate(495.90 374.00)"><rect x="-5" y="-2.700" width="10" height="5.400" rx="2.700"/></g><g transform="translate(510.45 374.00)"><path d="M-5.200 0L-2.800 -3H2.800L5.200 0L2.800 3H-2.800z" /></g><g transform="translate(525.00 374.00)"><path d="M-4.800 -1.400L4.800 -3.600V3.600H-4.800z" /></g><g transform="translate(539.55 374.00)"><path d="M-4.800 -3.400H4.800L2.800 3.400H-2.800z" /></g><g transform="translate(379.50 389.00)"><circle r="4.600"/></g><g transform="translate(394.05 389.00)"><path d="M-4 -4.500H4V1.800L0 4.800L-4 1.800z" /></g><g transform="translate(408.60 389.00)"><path d="M-2 -4.300H4.500V4.300H-4.500V-1.800z" /></g><g transform="translate(423.15 389.00)"><path d="M-4.700 -3.200C-2.500 -1.800 -1.500 -4.600 0 -3.600C1.500 -2.600 2.500 -4.800 4.700 -3.800V3.200C2.500 2.200 1.500 4.400 0 3.400C-1.500 2.400 -2.500 5 -4.700 3.800z" /></g><g transform="translate(437.70 389.00)"><circle r="4.600"/><path d="M-3.250 -3.250L3.250 3.250M3.250 -3.250L-3.250 3.250" /></g><g transform="translate(452.25 389.00)"><circle r="4.600"/><path d="M-4.600 0H4.600M0 -4.600V4.600" /></g><g transform="translate(466.80 389.00)"><path d="M-3.400 -4.500H3.400L-3.400 4.500H3.400z" /></g><g transform="translate(481.35 389.00)"><path d="M0 -4.800L3.600 0L0 4.800L-3.600 0zM-3.600 0H3.600" /></g><g transform="translate(495.90 389.00)"><path d="M0 -4L4.200 3.800H-4.200z" /></g><g transform="translate(510.45 389.00)"><path d="M-4.700 -4H4.700L0 4.500z" /></g><g transform="translate(525.00 389.00)"><path d="M-2.500 -4.300H4.700A5 5 0 0 0 4.700 4.300H-2.500A4.600 4.600 0 0 1 -2.500 -4.300z" /></g><g transform="translate(539.55 389.00)"><path d="M-4.200 -4.400H0.500A4.400 4.400 0 0 1 0.500 4.400H-4.200z" /></g><g transform="translate(379.50 403.80)"><circle r="4.600"/></g><g transform="translate(394.05 403.80)"><path d="M-3.500 -3.200V3.200A3.500 1.500 0 0 0 3.500 3.200V-3.200A3.500 1.500 0 0 0 -3.500 -3.200A3.500 1.500 0 0 0 3.500 -3.200" /></g><g transform="translate(408.60 403.80)"><path d="M-3.200 -3.500H3.200A1.500 3.500 0 0 1 3.200 3.500H-3.200A1.500 3.500 0 0 1 -3.200 -3.500z" /></g><g transform="translate(423.15 403.80)"><path d="M-2.500 -4H3A4.500 4.500 0 0 1 3 4H-2.500L-5 0z" /></g></svg>
<div class="a" style="left:378px;top:195.600px;width:20.800px;height:16.500px;box-sizing:border-box;background:#fbfbfb;border:1px solid #cfcfcf;border-radius:3px;box-shadow:0 1px 2px rgba(0,0,0,0.200)"></div>
<div class="a" style="left:558.750px;top:103px;width:120.750px;height:88px;box-sizing:border-box;background:#fff;border:1px solid #bdbdbd;border-radius:3px;box-shadow:0 1.500px 4px rgba(0,0,0,0.280)"></div>
<div class="a" style="left:560px;top:121px;width:118.300px;height:16.500px;background:#f6f6f6"></div>
<div class="a" style="left:579px;top:154.500px;width:98.500px;height:1px;background:#e1e1e1"></div>
<svg style="left:566.50px;top:106.50px" width="10.00" height="10.00" viewBox="0 0 10 10"><path d="M2.500 0.400V7.500H9.600M0.400 2.500H7.500V9.600" fill="none" stroke="#3a3a3a" stroke-width="0.900"/><path d="M2.700 7.300L9 1" stroke="#3a3a3a" stroke-width="0.700"/></svg>
<svg style="left:565.80px;top:123.30px" width="10.50" height="10.50" viewBox="0 0 10.5 10.5"><rect x="0.400" y="0.400" width="6.800" height="6.400" fill="#3a86d6" stroke="#2b6cb8" stroke-width="0.600"/><circle cx="6.600" cy="6.600" r="3.200" fill="#fff" stroke="#333" stroke-width="0.900"/></svg>
<svg style="left:669.500px;top:125.50px" width="5" height="7" viewBox="0 0 5 7" fill="none" stroke="#444" stroke-width="0.900" stroke-linecap="round" stroke-linejoin="round"><path d="M1 0.800L3.800 3.500L1 6.200"/></svg>
<svg style="left:669.500px;top:143.00px" width="5" height="7" viewBox="0 0 5 7" fill="none" stroke="#444" stroke-width="0.900" stroke-linecap="round" stroke-linejoin="round"><path d="M1 0.800L3.800 3.500L1 6.200"/></svg>
<svg style="left:566.00px;top:160.40px" width="10.50" height="8.00" viewBox="0 0 10.5 8"><rect x="0.400" y="0.400" width="9.600" height="7.200" fill="#3a86d6" stroke="#2b6cb8" stroke-width="0.600"/><path d="M1 6L3.400 3.600L5.200 5.200L6.800 4L9.400 6.400" fill="none" stroke="#fff" stroke-width="0.900"/><circle cx="7.400" cy="2.200" r="0.800" fill="#f3c14e"/></svg>
<svg style="left:566.00px;top:177.30px" width="10.50" height="8.50" viewBox="0 0 10.5 8.5"><rect x="0.500" y="0.500" width="9.500" height="7.500" fill="#fff" stroke="#4a4a4a" stroke-width="0.900"/><rect x="1.600" y="2.200" width="7.300" height="4.200" fill="#3a86d6"/><path d="M2 5.800L4 4L5.400 5.200L6.800 4.200L8.600 6" fill="none" stroke="#fff" stroke-width="0.700"/></svg>
<div class="w" style="top:14.90px;font-size:8px;line-height:12px;color:#fff;font-weight:500"><span class="t" style="left:108.00px;transform:scaleX(0.9062)">自動保存</span></div>
<div class="w" style="top:14.90px;font-size:8px;line-height:12px;color:#fff;font-weight:500"><span class="t" style="left:155.74px;transform:scaleX(0.7517);letter-spacing:-0.683px">オフ</span></div>
<div class="w" style="top:14.65px;font-size:8.5px;line-height:12.5px;color:#fff;font-weight:500"><span class="t" style="left:275.00px;transform:scaleX(0.8615)">文書 1</span></div>
<div class="w" style="top:14.65px;font-size:8.5px;line-height:12.5px;color:#2f5597;font-weight:500"><span class="t" style="left:366.00px;transform:scaleX(0.9444)">検索</span></div>
<div class="w" style="top:38.90px;font-size:9px;line-height:13px;color:#3a3a3a;font-weight:500"><span class="t" style="left:84.74px;transform:scaleX(0.6833);letter-spacing:-0.768px">ファイル</span></div>
<div class="w" style="top:38.90px;font-size:9px;line-height:13px;color:#3a3a3a;font-weight:500"><span class="t" style="left:119.09px;transform:scaleX(0.8099);letter-spacing:-0.768px">ホーム</span></div>
<div class="w" style="top:38.90px;font-size:9px;line-height:13px;color:#3a3a3a;font-weight:500"><span class="t" style="left:152.00px;transform:scaleX(0.8611)">挿入</span></div>
<div class="w" style="top:38.90px;font-size:9px;line-height:13px;color:#3a3a3a;font-weight:500"><span class="t" style="left:180.60px;transform:scaleX(0.9111)">描画</span></div>
<div class="w" style="top:38.90px;font-size:9px;line-height:13px;color:#3a3a3a;font-weight:500"><span class="t" style="left:209.10px;transform:scaleX(0.7775);letter-spacing:-0.768px">デザイン</span></div>
<div class="w" style="top:38.90px;font-size:9px;line-height:13px;color:#3a3a3a;font-weight:500"><span class="t" style="left:248.46px;transform:scaleX(0.7593);letter-spacing:-0.768px">レイアウト</span></div>
<div class="w" style="top:38.90px;font-size:9px;line-height:13px;color:#3a3a3a;font-weight:500"><span class="t" style="left:293.00px;transform:scaleX(0.8889)">参考資料</span></div>
<div class="w" style="top:38.90px;font-size:9px;line-height:13px;color:#3a3a3a;font-weight:500"><span class="t" style="left:338.00px;transform:scaleX(0.9109)">差</span><span class="t" style="left:345.83px;transform:scaleX(0.8380);letter-spacing:-0.880px">し</span><span class="t" style="left:353.00px;transform:scaleX(0.9109)">込</span><span class="t" style="left:360.83px;transform:scaleX(0.8380);letter-spacing:-0.880px">み</span><span class="t" style="left:368.00px;transform:scaleX(0.9109)">文書</span></div>
<div class="w" style="top:38.90px;font-size:9px;line-height:13px;color:#3a3a3a;font-weight:500"><span class="t" style="left:397.00px;transform:scaleX(0.8611)">校閲</span></div>
<div class="w" style="top:38.90px;font-size:9px;line-height:13px;color:#3a3a3a;font-weight:500"><span class="t" style="left:425.00px;transform:scaleX(0.8667)">表示</span></div>
<div class="w" style="top:38.90px;font-size:9px;line-height:13px;color:#3a3a3a;font-weight:500"><span class="t" style="left:453.43px;transform:scaleX(0.8362);letter-spacing:-0.768px">ヘルプ</span></div>
<div class="w" style="top:38.90px;font-size:9px;line-height:13px;color:#1e4e9f;font-weight:700"><span class="t" style="left:486.00px;transform:scaleX(0.9501)">図</span><span class="t" style="left:494.17px;transform:scaleX(0.8741);letter-spacing:-0.880px">の</span><span class="t" style="left:501.65px;transform:scaleX(0.9501)">形式</span></div>
<div class="w" style="top:38.65px;font-size:8.5px;line-height:12.5px;color:#3a3a3a;font-weight:500"><span class="t" style="left:594.12px;transform:scaleX(0.7395);letter-spacing:-0.768px">コメント</span></div>
<div class="w" style="top:38.65px;font-size:8.5px;line-height:12.5px;color:#3a3a3a;font-weight:500"><span class="t" style="left:643.75px;transform:scaleX(0.8694)">編集</span></div>
<div class="w" style="top:38.85px;font-size:8.5px;line-height:12.5px;color:#fff;font-weight:700"><span class="t" style="left:688.00px;transform:scaleX(0.9444)">共有</span></div>
<div class="w" style="top:78.80px;font-size:7.7px;line-height:11.7px;color:#333;font-weight:500"><span class="t" style="left:92.50px;transform:scaleX(0.9055)">背景</span><span class="t" style="left:106.66px;transform:scaleX(0.8330);letter-spacing:-0.783px">の</span></div>
<div class="w" style="top:87.55px;font-size:7.7px;line-height:11.7px;color:#333;font-weight:500"><span class="t" style="left:95.60px;transform:scaleX(0.9000)">削除</span></div>
<div class="w" style="top:78.80px;font-size:7.7px;line-height:11.7px;color:#333;font-weight:500"><span class="t" style="left:128.00px;transform:scaleX(0.9375)">修整</span></div>
<div class="w" style="top:58.05px;font-size:7.7px;line-height:11.7px;color:#333;font-weight:500"><span class="t" style="left:164.40px;transform:scaleX(0.8562)">色</span></div>
<div class="w" style="top:74.05px;font-size:7.7px;line-height:11.7px;color:#333;font-weight:500"><span class="t" style="left:163.49px;transform:scaleX(0.7537);letter-spacing:-0.683px">アート</span><span class="t" style="left:180.29px;transform:scaleX(0.9191)">効果</span></div>
<div class="w" style="top:89.45px;font-size:7.7px;line-height:11.7px;color:#333;font-weight:500"><span class="t" style="left:163.75px;transform:scaleX(0.9104)">透明度</span></div>
<div class="w" style="top:78.80px;font-size:7.7px;line-height:11.7px;color:#333;font-weight:500"><span class="t" style="left:254.17px;transform:scaleX(0.6611);letter-spacing:-0.683px">クイック</span></div>
<div class="w" style="top:87.80px;font-size:7.7px;line-height:11.7px;color:#333;font-weight:500"><span class="t" style="left:249.74px;transform:scaleX(0.7687);letter-spacing:-0.683px">スタイル</span></div>
<div class="w" style="top:78.80px;font-size:7.7px;line-height:11.7px;color:#333;font-weight:500"><span class="t" style="left:328.00px;transform:scaleX(0.8864)">代替</span><span class="t" style="left:341.93px;transform:scaleX(0.7268);letter-spacing:-0.683px">テ</span></div>
<div class="w" style="top:87.80px;font-size:7.7px;line-height:11.7px;color:#333;font-weight:500"><span class="t" style="left:329.75px;transform:scaleX(0.7403);letter-spacing:-0.683px">キスト</span></div>
<div class="w" style="top:78.80px;font-size:7.7px;line-height:11.7px;color:#333;font-weight:500"><span class="t" style="left:371.25px;transform:scaleX(0.8969)">位置</span></div>
<div class="w" style="top:79.05px;font-size:7.7px;line-height:11.7px;color:#333;font-weight:500"><span class="t" style="left:394.40px;transform:scaleX(0.8890)">文字列</span><span class="t" style="left:415.42px;transform:scaleX(0.8179);letter-spacing:-0.783px">の</span><span class="t" style="left:421.64px;transform:scaleX(0.8890)">折</span></div>
<div class="w" style="top:87.80px;font-size:7.7px;line-height:11.7px;color:#333;font-weight:500"><span class="t" style="left:398.45px;transform:scaleX(0.7566);letter-spacing:-0.783px">り</span><span class="t" style="left:404.21px;transform:scaleX(0.8224)">返</span><span class="t" style="left:410.49px;transform:scaleX(0.7566);letter-spacing:-0.783px">し</span></div>
<div class="w" style="top:58.55px;font-size:7.7px;line-height:11.7px;color:#b8b8b8;font-weight:400"><span class="t" style="left:446.25px;transform:scaleX(0.8890)">前面</span><span class="t" style="left:460.15px;transform:scaleX(0.8179);letter-spacing:-0.783px">へ</span><span class="t" style="left:466.38px;transform:scaleX(0.8890)">移動</span></div>
<div class="w" style="top:74.05px;font-size:7.7px;line-height:11.7px;color:#b8b8b8;font-weight:400"><span class="t" style="left:446.25px;transform:scaleX(0.8890)">背面</span><span class="t" style="left:460.15px;transform:scaleX(0.8179);letter-spacing:-0.783px">へ</span><span class="t" style="left:466.38px;transform:scaleX(0.8890)">移動</span></div>
<div class="w" style="top:89.45px;font-size:7.7px;line-height:11.7px;color:#222;font-weight:500"><span class="t" style="left:446.01px;transform:scaleX(0.7138);letter-spacing:-0.683px">オブジェクト</span><span class="t" style="left:477.27px;transform:scaleX(0.8008);letter-spacing:-0.783px">の</span><span class="t" style="left:483.37px;transform:scaleX(0.8704)">選択</span><span class="t" style="left:496.98px;transform:scaleX(0.8008);letter-spacing:-0.783px">と</span><span class="t" style="left:503.07px;transform:scaleX(0.8704)">表示</span></div>
<div class="w" style="top:78.80px;font-size:7.7px;line-height:11.7px;color:#333;font-weight:500"><span class="t" style="left:560.38px;transform:scaleX(0.6505);letter-spacing:-0.683px">トリミング</span></div>
<div class="w" style="top:62.65px;font-size:8.5px;line-height:12.5px;color:#444;font-weight:500"><span class="t" style="left:602.75px;transform:scaleX(0.9940)">3.66&quot;</span></div>
<div class="w" style="top:82.15px;font-size:8.5px;line-height:12.5px;color:#444;font-weight:500"><span class="t" style="left:602.75px;transform:scaleX(0.9745)">6.5&quot;</span></div>
<div class="w" style="top:103.65px;font-size:7.5px;line-height:11.5px;color:#444;font-weight:500"><span class="t" style="left:157.00px;transform:scaleX(0.8500)">調整</span></div>
<div class="w" style="top:103.65px;font-size:7.5px;line-height:11.5px;color:#444;font-weight:500"><span class="t" style="left:257.00px;transform:scaleX(0.8799)">図</span><span class="t" style="left:263.72px;transform:scaleX(0.8095);letter-spacing:-0.783px">の</span><span class="t" style="left:269.64px;transform:scaleX(0.7215);letter-spacing:-0.683px">スタイル</span></div>
<div class="w" style="top:103.65px;font-size:7.5px;line-height:11.5px;color:#444;font-weight:500"><span class="t" style="left:317.26px;transform:scaleX(0.6919);letter-spacing:-0.683px">アクセシビリティ</span></div>
<div class="w" style="top:103.65px;font-size:7.5px;line-height:11.5px;color:#444;font-weight:500"><span class="t" style="left:449.40px;transform:scaleX(0.8500)">配置</span></div>
<div class="w" style="top:106.65px;font-size:8.5px;line-height:12.5px;color:#333;font-weight:500"><span class="t" style="left:581.76px;transform:scaleX(0.6147);letter-spacing:-0.768px">トリミング</span><span class="t" style="font-weight:400;left:606.00px;transform:scaleX(1.0564)">(<u>C</u>)</span></div>
<div class="w" style="top:123.65px;font-size:8.5px;line-height:12.5px;color:#333;font-weight:500"><span class="t" style="left:582.00px;transform:scaleX(0.8110)">図形</span><span class="t" style="left:596.27px;transform:scaleX(0.7461);letter-spacing:-0.880px">に</span><span class="t" style="left:602.66px;transform:scaleX(0.8110)">合</span><span class="t" style="left:609.63px;transform:scaleX(0.7461);letter-spacing:-0.880px">わせて</span><span class="t" style="left:627.87px;transform:scaleX(0.6650);letter-spacing:-0.768px">トリミング</span><span class="t" style="font-weight:400;left:652.50px;transform:scaleX(1.1994)">(<u>S</u>)</span></div>
<div class="w" style="top:141.65px;font-size:8.5px;line-height:12.5px;color:#333;font-weight:500"><span class="t" style="left:581.00px;transform:scaleX(0.8704)">縦横比</span><span class="t" style="font-weight:400;left:603.75px;transform:scaleX(0.9511)">(<u>A</u>)</span></div>
<div class="w" style="top:159.65px;font-size:8.5px;line-height:12.5px;color:#333;font-weight:500"><span class="t" style="left:581.00px;transform:scaleX(0.7973)">塗</span><span class="t" style="left:587.85px;transform:scaleX(0.7335);letter-spacing:-0.880px">りつぶし</span><span class="t" style="font-weight:400;left:610.80px;transform:scaleX(0.8999)">(<u>L</u>)</span></div>
<div class="w" style="top:176.65px;font-size:8.5px;line-height:12.5px;color:#333;font-weight:500"><span class="t" style="left:581.00px;transform:scaleX(0.8563)">枠</span><span class="t" style="left:588.36px;transform:scaleX(0.7878);letter-spacing:-0.880px">に</span><span class="t" style="left:595.10px;transform:scaleX(0.8563)">合</span><span class="t" style="left:602.46px;transform:scaleX(0.7878);letter-spacing:-0.880px">わせる</span><span class="t" style="font-weight:400;left:620.60px;transform:scaleX(0.9549)">(<u>T</u>)</span></div>
<div class="w" style="top:124.85px;font-size:8.5px;line-height:12.5px;color:#222;font-weight:700"><span class="t" style="left:380.00px;transform:scaleX(0.8519)">四角形</span></div>
<div class="w" style="top:163.25px;font-size:8.5px;line-height:12.5px;color:#222;font-weight:700"><span class="t" style="left:380.60px;transform:scaleX(0.8167)">基本図形</span></div>
<div class="w" style="top:246.15px;font-size:8.5px;line-height:12.5px;color:#222;font-weight:700"><span class="t" style="left:379.73px;transform:scaleX(0.7016);letter-spacing:-0.768px">ブロック</span><span class="t" style="left:403.10px;transform:scaleX(0.8556)">矢印</span></div>
<div class="w" style="top:314.25px;font-size:8.5px;line-height:12.5px;color:#222;font-weight:700"><span class="t" style="left:381.00px;transform:scaleX(0.8333)">数式図形</span></div>
<div class="w" style="top:353.25px;font-size:8.5px;line-height:12.5px;color:#222;font-weight:700"><span class="t" style="left:379.73px;transform:scaleX(0.7115);letter-spacing:-0.768px">フローチャート</span></div>
<div class="w" style="top:200.60px;font-size:7.2px;line-height:11.2px;color:#5a5a5a;font-weight:400"><span class="t" style="left:382.00px;transform:scaleX(1.0000)">楕円</span></div>
<svg style="left:0;top:0" width="800" height="400" viewBox="0 0 800 400">
<g stroke="#a8a8a8" stroke-width="0.800"><path d="M204 217V228M190 231H201M586 217V228"/></g>
<circle cx="204" cy="231" r="2.900" fill="#fff" stroke="#444" stroke-width="1"/>
<circle cx="204" cy="339" r="2.900" fill="#fff" stroke="#444" stroke-width="1"/>
<circle cx="586" cy="231" r="2.900" fill="#fff" stroke="#444" stroke-width="1"/>
<circle cx="586" cy="339" r="2.900" fill="#fff" stroke="#444" stroke-width="1"/>
<rect x="593" y="231.500" width="17" height="17" fill="#fff" stroke="#b5b5b5" stroke-width="0.900"/>
<path d="M596 234.500H607M596 237H607M596 242H598M605 242H607M596 245H607" stroke="#58a6e6" stroke-width="0.800"/>
<path d="M598.600 242.500C598.600 238 604.400 238 604.400 242.500" fill="none" stroke="#1a1a1a" stroke-width="1.500"/>
<path d="M626 232.300H633.800V238.300H629.800L627.600 240.300V238.300H626z" fill="#fff" stroke="#555" stroke-width="0.900" stroke-linejoin="round"/>
<path d="M623.600 232.800H627M625.300 231.100V234.500" stroke="#3a9a4a" stroke-width="1"/>
</svg>
<div class="a" style="left:478.60px;top:31.90px;width:54.60px;height:27.00px;box-sizing:border-box;border:3.50px solid #e5101d;border-radius:7.50px"></div>
<div class="a" style="left:549.80px;top:47.30px;width:143.40px;height:90.30px;box-sizing:border-box;border:3.80px solid #e5101d;border-radius:17.00px"></div>
<div class="a" style="left:364.40px;top:170.00px;width:28.60px;height:29.40px;box-sizing:border-box;border:3.70px solid #e5101d;border-radius:5.50px"></div>
</div></body></html>
